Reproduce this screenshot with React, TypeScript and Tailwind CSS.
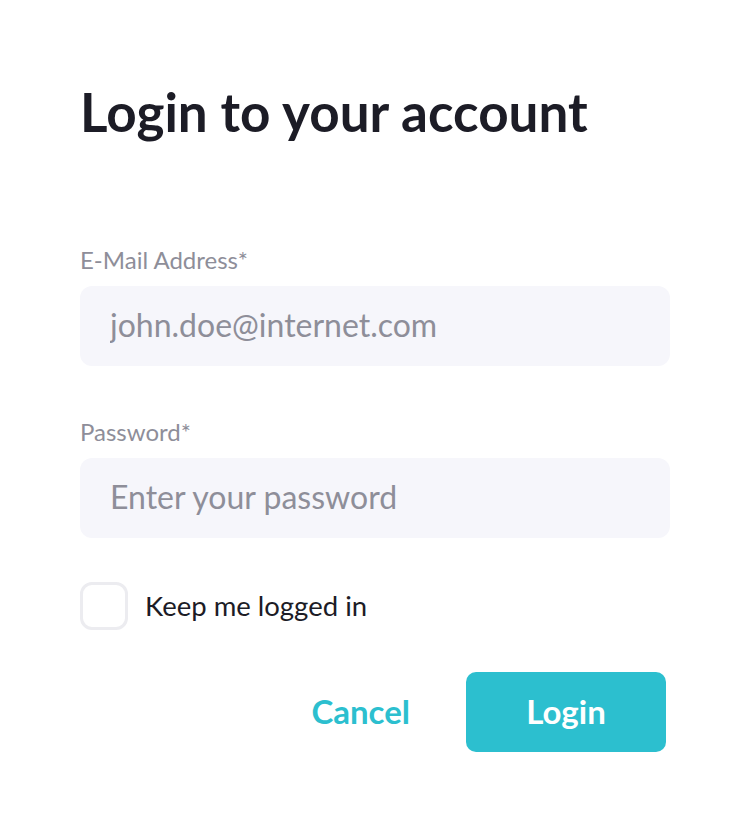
const App = () => {
  return (
    <div className="min-h-screen bg-white font-['Lato',sans-serif]">
      <div className="w-[750px] px-[80px] pt-[78px]">
        <h1 className="text-[53px] leading-[68px] font-bold text-[#1c1c26]">Login to your account</h1>

        <form className="mt-[100px]">
          <label className="block text-[24px] leading-[28px] text-[#8e8e99]">E-Mail Address*</label>
          <input
            type="email"
            placeholder="john.doe@internet.com"
            className="mt-[12px] w-[590px] h-[80px] rounded-[12px] bg-[#f6f6fb] px-[30px] pb-[3px] text-[32px] text-[#1c1c26] placeholder:text-[#8e8e99] outline-none"
          />

          <label className="mt-[52px] block text-[24px] leading-[28px] text-[#8e8e99]">Password*</label>
          <input
            type="password"
            placeholder="Enter your password"
            className="mt-[12px] w-[590px] h-[80px] rounded-[12px] bg-[#f6f6fb] px-[30px] pb-[3px] text-[32px] text-[#1c1c26] placeholder:text-[#8e8e99] outline-none"
          />

          <label className="mt-[44px] flex items-center gap-[17px] cursor-pointer">
            <span className="w-[48px] h-[48px] rounded-[12px] border-[3px] border-[#ececf0] bg-white" />
            <span className="text-[27.5px] text-[#1c1c26]">Keep me logged in</span>
          </label>

          <div className="mt-[42px] flex justify-end items-center gap-[56px] pr-[4px]">
            <button type="button" className="text-[33px] font-bold text-[#2cbfcf]">Cancel</button>
            <button type="submit" className="w-[200px] h-[80px] rounded-[10px] bg-[#2cbfcf] text-[33px] font-bold text-white">Login</button>
          </div>
        </form>
      </div>
    </div>
  );
};

export default App;
